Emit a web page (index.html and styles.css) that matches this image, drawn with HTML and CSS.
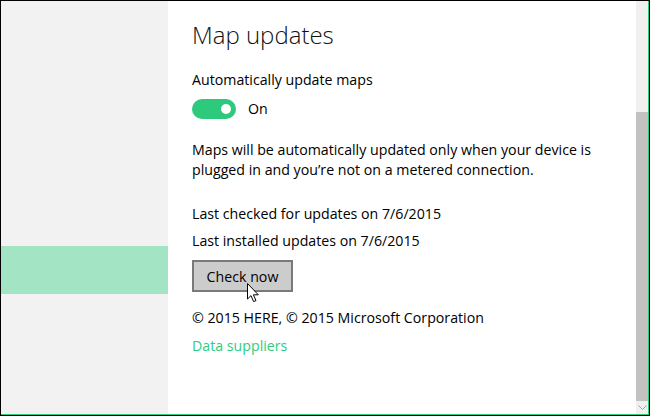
FILE: index.html
```html
<!DOCTYPE html>
<html>
<head>
<meta charset="utf-8">
<link rel="stylesheet" href="styles.css">
</head>
<body>
<div class="window">
  <div class="inner">
    <aside class="sidebar">
      <div class="sel"></div>
    </aside>
    <main class="content">
      <h1 class="title">Map updates</h1>
      <p class="label">Automatically update maps</p>
      <div class="toggle-row">
        <span class="toggle"><span class="knob"></span></span>
        <span class="toggle-text">On</span>
      </div>
      <p class="desc">Maps will be automatically updated only when your device is plugged in and you’re not on a metered connection.</p>
      <p class="info first">Last checked for updates on 7/6/2015</p>
      <p class="info">Last installed updates on 7/6/2015</p>
      <div class="btn-wrap">
        <button class="btn">Check now</button>
        <svg class="cursor" width="13" height="20" viewBox="0 0 13 20"><path d="M0.5 0.5 L0.5 16 L4 12.6 L6.6 18.6 L9 17.6 L6.4 11.8 L11.3 11.8 Z" fill="#fff" stroke="#000" stroke-width="1" stroke-linejoin="miter"/></svg>
      </div>
      <p class="copy">© 2015 HERE, © 2015 Microsoft Corporation</p>
      <a class="link" href="#">Data suppliers</a>
    </main>
    <div class="scrollbar">
      <div class="track-top"></div>
      <div class="thumb"></div>
      <div class="arrow"><svg width="9" height="6" viewBox="0 0 9 6"><path d="M0.5 0.5 L4.5 4.5 L8.5 0.5" fill="none" stroke="#a0a0a0" stroke-width="1"/></svg></div>
    </div>
  </div>
</div>
</body>
</html>
```
FILE: styles.css
```css
* { box-sizing: border-box; }
html, body { margin: 0; padding: 0; background: #fff; }
body { width: 650px; height: 416px; overflow: hidden; font-family: "Open Sans", "Noto Sans", sans-serif; color: #000; }
.window { width: 650px; height: 416px; border: 1px solid #000; }
.inner { display: flex; height: 100%; border-right: 1px solid #2ecc7f; border-bottom: 1px solid #2ecc7f; }
.sidebar { width: 167px; flex: none; background: #f2f2f2; padding-top: 245px; }
.sel { height: 48px; background: #a3e4c5; }
.content { flex: 1; padding: 18px 0 0 24px; }
.title { margin: 0; font-size: 24px; font-weight: 300; line-height: 32px; color: #111; }
.label { margin: 19px 0 0; font-size: 14.2px; line-height: 20px; }
.toggle-row { display: flex; align-items: center; margin-top: 9px; height: 20px; }
.toggle { position: relative; width: 44px; height: 20px; border-radius: 10px; background: #2dc97c; }
.knob { position: absolute; left: 29px; top: 5px; width: 10px; height: 10px; border-radius: 50%; background: #fff; }
.toggle-text { margin-left: 12px; font-size: 14.2px; line-height: 20px; }
.desc { margin: 21px 0 0; width: 425px; font-size: 14.2px; line-height: 20px; }
.info { margin: 0; font-size: 14.2px; line-height: 27px; }
.info.first { margin-top: 20px; }
.btn-wrap { position: relative; margin-top: 6px; height: 32px; }
.btn { width: 101px; height: 32px; border: 2px solid #7a7a7a; background: #cccccc; font-family: inherit; font-size: 14.2px; color: #000; padding: 0; }
.cursor { position: absolute; left: 55px; top: 23px; }
.copy { margin: 16px 0 0; font-size: 14.2px; line-height: 20px; }
.link { display: block; margin-top: 8px; font-size: 14.2px; line-height: 20px; color: #2ecc7f; text-decoration: none; }
.scrollbar { width: 12px; flex: none; background: #f0f0f0; display: flex; flex-direction: column; }
.track-top { height: 111px; }
.thumb { flex: 1; background: #c2c2c2; }
.arrow { height: 13px; display: flex; align-items: center; justify-content: center; }
```
